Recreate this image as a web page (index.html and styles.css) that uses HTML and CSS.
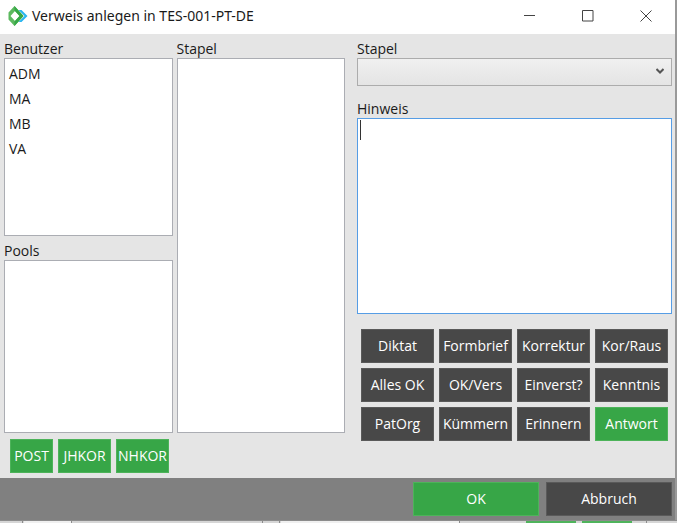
FILE: index.html
```html
<!DOCTYPE html>
<html lang="de">
<head>
  <meta charset="UTF-8" />
  <meta name="viewport" content="width=device-width, initial-scale=1.0"/>
  <title>Verweis anlegen in TES-001-PT-DE</title>
  <link rel="stylesheet" href="styles.css">
</head>
<body>

  <div class="window">
    <header class="titlebar">
      <svg class="logo" width="20" height="20" viewBox="0 0 20 20">
        <path d="M10.5 4 L13.5 4 L19.5 10 L13.5 16 L10.5 16 L16.5 10 Z" fill="#29b6f0"/>
        <path d="M6.5 0 L15.5 10 L6.5 20 L0.5 13.5 L0.5 6.5 Z M7 5 L2.5 10 L7 15 L11.5 10 Z" fill="#5cb95f" fill-rule="evenodd"/>
        <path d="M6.5 0 L15.5 10 L6.5 20 L6.5 15.5 L11.5 10 L6.5 4.5 Z" fill="#36a847"/>
      </svg>
      <h1>Verweis anlegen in TES-001-PT-DE</h1>
      <div class="window-controls">
        <button type="button" aria-label="Minimieren">
          <svg width="12" height="12" viewBox="0 0 12 12"><path d="M0 5.5 H11"/></svg>
        </button>
        <button type="button" aria-label="Maximieren">
          <svg width="12" height="12" viewBox="0 0 12 12"><path d="M0.5 0.5 H11 V11 H0.5 Z"/></svg>
        </button>
        <button type="button" aria-label="Schließen">
          <svg width="12" height="12" viewBox="0 0 12 12"><path d="M0.5 0.5 L11.5 11.5 M11.5 0.5 L0.5 11.5"/></svg>
        </button>
      </div>
    </header>

    <main class="content">
      <div class="lists">
        <div class="column">
          <h2 id="benutzer">Benutzer</h2>
          <ul class="list users" aria-labelledby="benutzer">
            <li>ADM</li>
            <li>MA</li>
            <li>MB</li>
            <li>VA</li>
          </ul>
          <h2 id="pools" class="pools">Pools</h2>
          <ul class="list" aria-labelledby="pools"></ul>
        </div>
        <div class="column">
          <h2 id="stapel">Stapel</h2>
          <ul class="list" aria-labelledby="stapel"></ul>
        </div>
        <div class="pool-buttons">
          <button type="button" class="btn green small">POST</button>
          <button type="button" class="btn green">JHKOR</button>
          <button type="button" class="btn green">NHKOR</button>
        </div>
      </div>

      <div class="details">
        <label for="stapelSelect">Stapel</label>
        <div class="select-box">
          <select id="stapelSelect"><option></option></select>
          <svg class="arrow" width="8" height="6" viewBox="0 0 8 6"><path d="M0.5 1 L4 4.5 L7.5 1"/></svg>
        </div>
        <label for="hinweis" class="hinweis-label">Hinweis</label>
        <div class="note-box">
          <textarea id="hinweis"></textarea>
          <span class="caret"></span>
        </div>
        <div class="actions">
          <button type="button" class="btn">Diktat</button>
          <button type="button" class="btn">Formbrief</button>
          <button type="button" class="btn">Korrektur</button>
          <button type="button" class="btn">Kor/Raus</button>
          <button type="button" class="btn">Alles OK</button>
          <button type="button" class="btn">OK/Vers</button>
          <button type="button" class="btn">Einverst?</button>
          <button type="button" class="btn">Kenntnis</button>
          <button type="button" class="btn">PatOrg</button>
          <button type="button" class="btn">Kümmern</button>
          <button type="button" class="btn">Erinnern</button>
          <button type="button" class="btn green">Antwort</button>
        </div>
      </div>
    </main>

    <footer class="footer">
      <button type="button" class="btn green">OK</button>
      <button type="button" class="btn">Abbruch</button>
    </footer>
  </div>

  <!-- edge of the window behind the dialog -->
  <svg class="behind" width="100%" height="3">
    <rect width="100%" height="3" fill="#d6d6d6"/>
    <rect x="24" width="47" height="3" fill="#f0f0f0"/>
    <rect x="281" width="178" height="3" fill="#f0f0f0"/>
    <path d="M22.5 0 V3 M71.5 0 V3 M262.5 0 V3 M279.5 0 V3 M459.5 0 V3 M646.5 0 V3" stroke="#8c8c8c"/>
    <path d="M526 2 H576 M582 2 H632" stroke="#4fb45c" stroke-width="2"/>
    <rect width="100%" height="1" fill="#8c8c8c"/>
  </svg>

</body>
</html>
```

FILE: styles.css
```css
* {
  margin: 0;
  padding: 0;
  box-sizing: border-box;
}

body {
  display: flex;
  flex-direction: column;
  min-height: 100vh;
  font-family: "Open Sans", "Noto Sans", sans-serif;
  font-size: 14px;
  line-height: 18px;
  color: #1a1a1a;
  background: #e5e5e5;
}

button, select, textarea {
  font: inherit;
}

.window {
  flex: 1;
  display: flex;
  flex-direction: column;
  border-right: 2px solid #999;
}

.titlebar {
  display: flex;
  align-items: center;
  height: 34px;
  padding-left: 8px;
  padding-bottom: 2px;
  background: #fff;
}

.titlebar h1 {
  flex: 1;
  margin-left: 4px;
  font-family: "Noto Sans", "Open Sans", sans-serif;
  font-size: 14px;
  font-weight: 400;
}

.window-controls {
  display: flex;
}

.window-controls button {
  display: flex;
  align-items: center;
  justify-content: center;
  width: 58px;
  height: 32px;
  border: none;
  background: none;
}

.window-controls path {
  fill: none;
  stroke: #444;
}

.content {
  flex: 1;
  display: flex;
  gap: 12px;
  padding: 6px 3px 5px 4px;
}

.lists {
  flex: 341;
  display: grid;
  grid-template-columns: 1fr 1fr;
  grid-template-rows: 1fr auto;
  column-gap: 4px;
  row-gap: 6px;
}

.column {
  display: flex;
  flex-direction: column;
}

h2 {
  font-size: 14px;
  font-weight: 400;
}

.pools {
  margin-top: 6px;
}

.list {
  flex: 173;
  padding: 2px 4px;
  border: 1px solid #abadb3;
  background: #fff;
  list-style: none;
}

.list.users {
  flex: 178;
}

.list li {
  line-height: 25px;
}

.pool-buttons {
  grid-column: 1 / 3;
  display: flex;
  gap: 5px;
  padding-left: 6px;
}

.btn {
  height: 34px;
  border: 1px solid #5a5a5a;
  background: #484848;
  color: #fff;
  text-align: center;
  white-space: nowrap;
}

.btn.green {
  border-color: #4db35a;
  background: #37a647;
}

.pool-buttons .btn {
  width: 53px;
}

.pool-buttons .small {
  width: 43px;
}

.details {
  flex: 315;
  display: flex;
  flex-direction: column;
}

.select-box, .note-box {
  position: relative;
  display: flex;
}

select {
  width: 100%;
  height: 28px;
  appearance: none;
  border: 1px solid #acacac;
  border-radius: 0;
  background: linear-gradient(#f0f0f0, #e4e4e4);
}

.arrow {
  position: absolute;
  top: 10px;
  right: 8px;
  pointer-events: none;
}

.arrow path {
  fill: none;
  stroke: #555;
  stroke-width: 2;
}

.hinweis-label {
  margin-top: 14px;
}

.note-box {
  flex: 1;
}

textarea {
  width: 100%;
  padding: 2px 4px;
  border: 1px solid #569de5;
  background: #fff;
  resize: none;
  outline: none;
}

.caret {
  position: absolute;
  top: 2px;
  left: 3px;
  width: 1px;
  height: 20px;
  background: #333;
}

.actions {
  display: grid;
  grid-template-columns: repeat(4, 1fr);
  gap: 5px;
  padding: 15px 4px 32px;
}

.footer {
  display: flex;
  justify-content: flex-end;
  gap: 7px;
  padding: 4px 3px;
  background: #808080;
}

.footer .btn {
  width: 126px;
}

.behind {
  display: block;
}
```
